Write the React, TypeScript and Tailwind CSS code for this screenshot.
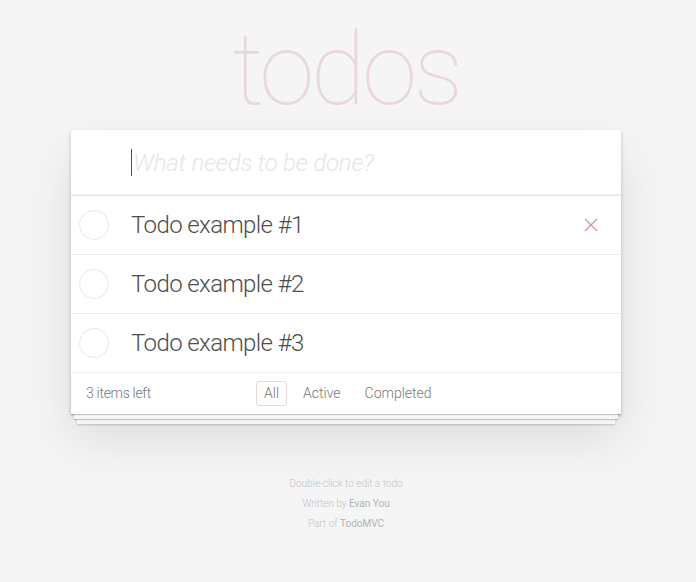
import React from "react";

const todos = [
  { id: 1, title: "Todo example #1" },
  { id: 2, title: "Todo example #2" },
  { id: 3, title: "Todo example #3" },
];

function Toggle() {
  return (
    <svg width="30" height="30" viewBox="0 0 30 30" className="shrink-0">
      <circle cx="15" cy="15" r="14.4" fill="none" stroke="#ededed" strokeWidth="1.2" />
    </svg>
  );
}

function Destroy() {
  return (
    <svg width="14" height="14" viewBox="0 0 14 14">
      <path d="M1 1 L13 13 M13 1 L1 13" stroke="#cc9a9a" strokeWidth="1.3" fill="none" />
    </svg>
  );
}

export default function App() {
  return (
    <div className="min-h-screen w-full bg-[#f5f5f5] font-['Roboto',sans-serif] font-light text-[#4d4d4d] antialiased">
      <div className="w-[550px] ml-[71px] pt-[20px]">
        <h1 className="text-center text-[100px] leading-none font-thin text-[rgba(175,47,47,0.15)] tracking-[-3.5px]">
          todos
        </h1>

        <section className="mt-[10px] bg-white shadow-[0_2px_4px_0_rgba(0,0,0,0.2),0_25px_50px_0_rgba(0,0,0,0.1)]">
          <div className="h-[65px] flex items-center pl-[60px] pr-4 shadow-[inset_0_-2px_1px_rgba(0,0,0,0.03)]">
            <span className="w-px h-[27px] bg-[#4d4d4d] mr-[1px]" />
            <input
              readOnly
              placeholder="What needs to be done?"
              className="flex-1 bg-transparent outline-none text-[24px] font-light tracking-[-0.2px] placeholder:italic placeholder:text-[#e6e6e6]"
            />
          </div>

          <ul className="border-t border-[#e6e6e6]">
            {todos.map((t, i) => (
              <li key={t.id} className="h-[59px] flex items-center border-b border-[#ededed] pl-2 pr-[23px]">
                <Toggle />
                <label className="ml-[22px] flex-1 text-[24px] leading-[1.2] tracking-[-0.6px]">{t.title}</label>
                {i === 0 && <Destroy />}
              </li>
            ))}
          </ul>

          <footer className="h-[41px] flex items-center px-[15px] text-[14px] text-[#777] bg-white shadow-[0_1px_1px_rgba(0,0,0,0.2),0_8px_0_-3px_#f6f6f6,0_9px_1px_-3px_rgba(0,0,0,0.2),0_16px_0_-6px_#f6f6f6,0_17px_2px_-6px_rgba(0,0,0,0.2)]">
            <span className="w-[170px] tracking-[-0.3px]">3 items left</span>
            <ul className="flex items-center gap-[8px]">
              <li>
                <a className="block px-[7px] py-[3px] leading-[17px] rounded-[3px] border border-[rgba(175,47,47,0.2)]">All</a>
              </li>
              <li>
                <a className="block px-[7px] py-[3px] leading-[17px] rounded-[3px] border border-transparent">Active</a>
              </li>
              <li>
                <a className="block px-[7px] py-[3px] leading-[17px] rounded-[3px] border border-transparent">Completed</a>
              </li>
            </ul>
          </footer>
        </section>

        <footer className="mt-[60px] text-center text-[10px] leading-[20px] text-[#bfbfbf] [text-shadow:0_1px_0_rgba(255,255,255,0.5)]">
          <p>Double-click to edit a todo</p>
          <p>
            Written by <a className="font-normal text-[#b0b0b0]">Evan You</a>
          </p>
          <p>
            Part of <a className="font-normal text-[#b0b0b0]">TodoMVC</a>
          </p>
        </footer>
      </div>
    </div>
  );
}
